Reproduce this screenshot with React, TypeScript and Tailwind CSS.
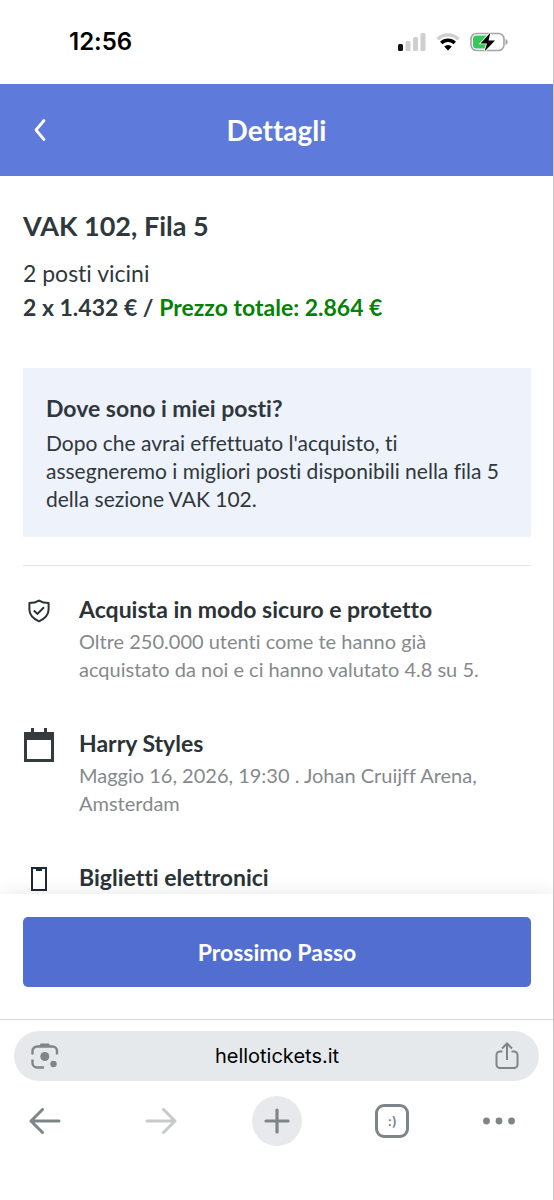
import type { ReactNode } from "react";

function ShieldIcon() {
  return (
    <svg width="24" height="24" viewBox="0 0 24 24" fill="none" stroke="#2b3336" strokeWidth="2">
      <path d="M12 1.6c3 1.9 6.200 2.500 9.600 2.500v6.400c0 5.400-4.400 9.400-9.600 11.800-5.200-2.400-9.600-6.400-9.600-11.800V4.100c3.400 0 6.600-.6 9.600-2.500z" strokeLinejoin="round" />
      <path d="M6.800 11.600l3.600 3.300 6.600-6.600" />
    </svg>
  );
}

function CalendarIcon() {
  return (
    <svg width="32" height="34" viewBox="0 0 32 34" fill="#333b3c">
      <path d="M8 0h3v4h10V0h3v4h7v30H1V4h7z" />
      <path d="M4 12h24v19H4z" fill="#fff" />
    </svg>
  );
}

function PhoneIcon() {
  return (
    <svg width="16" height="24" viewBox="0 0 16 24" fill="none" stroke="#1c2838" strokeWidth="2">
      <path d="M1 1h14v22H1z" />
      <path d="M5 2.500h6" strokeWidth="3" />
    </svg>
  );
}

function StatusIcons() {
  return (
    <div className="flex items-center gap-2.5">
      <svg width="28" height="18" viewBox="0 0 28 18" fill="#cfcfcf">
        <rect x="0" y="11" width="5" height="7" rx="1.500" fill="#111" />
        <rect x="7.500" y="8" width="5" height="10" rx="1.500" />
        <rect x="15" y="4" width="5" height="14" rx="1.500" />
        <rect x="22.500" y="0" width="5" height="18" rx="1.500" />
      </svg>
      <svg width="24" height="18" viewBox="0 0 24 18" fill="none">
        <path d="M1.500 6.200a15 15 0 0 1 21 0" stroke="#cfcfcf" strokeWidth="3.400" />
        <path d="M5.300 10a9.600 9.600 0 0 1 13.400 0" stroke="#000" strokeWidth="3.400" />
        <path d="M12 17.500l-3.800-3.900a5.500 5.500 0 0 1 7.600 0z" fill="#000" />
      </svg>
      <svg width="38" height="20" viewBox="0 0 38 20">
        <rect x="1" y="1.500" width="33" height="17" rx="5.500" fill="#fff" stroke="#a5a5a5" strokeWidth="1.600" />
        <path d="M6.500 3.500H18v13H6.500A3.500 3.500 0 0 1 3 13V7a3.500 3.500 0 0 1 3.500-3.500z" fill="#38c759" />
        <path d="M35.500 7v6c1.400-.6 2.200-1.700 2.200-3s-.8-2.400-2.200-3z" fill="#a5a5a5" />
        <path d="M20.500 .5L10.500 11.500h6.500L14.500 19.500l10.500-11h-6.500z" fill="#000" stroke="#fff" strokeWidth="1.600" paintOrder="stroke" />
      </svg>
    </div>
  );
}

function LensIcon() {
  return (
    <svg width="28" height="28" viewBox="0 0 28 28" fill="none" stroke="#808589" strokeWidth="2.400">
      <path d="M1.500 12.500V9a4.500 4.500 0 0 1 4.500-4.500h15.500A4.500 4.500 0 0 1 26 9v3.500M1.500 17.500V21A4.500 4.500 0 0 0 6 25.500h7" />
      <path d="M8 4.500l1.500-3h8.500l1.500 3z" fill="#808589" stroke="none" />
      <circle cx="13.800" cy="14.500" r="4.500" fill="#808589" stroke="none" />
      <circle cx="22.500" cy="22" r="3.200" fill="#808589" stroke="none" />
    </svg>
  );
}

function ShareIcon() {
  return (
    <svg width="24" height="28" viewBox="0 0 24 28" fill="none" stroke="#808589" strokeWidth="2">
      <path d="M7.500 9.500H5A3.500 3.500 0 0 0 1.500 13v9.500A3.500 3.500 0 0 0 5 26h14a3.500 3.500 0 0 0 3.500-3.500V13A3.500 3.500 0 0 0 19 9.500h-2.500" />
      <path d="M12 18V2M7 6.500l5-5 5 5" />
    </svg>
  );
}

function ArrowIcon() {
  return (
    <svg width="32" height="26" viewBox="0 0 32 26" fill="none" stroke="currentColor" strokeWidth="3" strokeLinecap="round" strokeLinejoin="round">
      <path d="M30 13H2M13.500 1.500L2 13l11.500 11.500" />
    </svg>
  );
}

type InfoRowProps = {
  icon: ReactNode;
  title: string;
  text: string;
};

function InfoRow({ icon, title, text }: InfoRowProps) {
  return (
    <li className="flex gap-6">
      <div className="flex h-9 w-8 shrink-0 items-center justify-center">{icon}</div>
      <div className="pr-4">
        <h3 className="text-[23px] leading-8 font-bold text-[#2b3336]">{title}</h3>
        <p className="mt-0.5 text-[20px] leading-7 text-[#85898b]">{text}</p>
      </div>
    </li>
  );
}

const infoRows: InfoRowProps[] = [
  {
    icon: <ShieldIcon />,
    title: "Acquista in modo sicuro e protetto",
    text: "Oltre 250.000 utenti come te hanno già acquistato da noi e ci hanno valutato 4.8 su 5.",
  },
  {
    icon: <CalendarIcon />,
    title: "Harry Styles",
    text: "Maggio 16, 2026, 19:30 . Johan Cruijff Arena, Amsterdam",
  },
  { icon: <PhoneIcon />, title: "Biglietti elettronici", text: "" },
];

export default function App() {
  return (
    <div className="flex h-screen flex-col border-r border-[#c8c8c8] bg-white font-['Lato',sans-serif] text-[#2f383c] [font-variant-ligatures:none]">
      <div className="flex h-[84px] shrink-0 items-center justify-between pr-[45px] pl-[69px] font-['Inter',sans-serif]">
        <span className="text-[24px] leading-8 font-semibold text-black">12:56</span>
        <StatusIcons />
      </div>

      <header className="grid h-[92px] shrink-0 grid-cols-[80px_1fr_80px] items-center bg-[#5e7adb] text-white">
        <button type="button" aria-label="Indietro" className="flex h-full items-center justify-center">
          <svg width="14" height="24" viewBox="0 0 14 24" fill="none" stroke="currentColor" strokeWidth="2.800" strokeLinecap="round" strokeLinejoin="round">
            <path d="M11 2.500L3 12l8 9.500" />
          </svg>
        </button>
        <h1 className="text-center text-[28px] leading-9 font-bold">Dettagli</h1>
      </header>

      <main className="min-h-0 flex-1 overflow-hidden pt-8 pr-[22px] pl-[23px]">
        <h2 className="text-[27px] leading-9 font-bold">VAK 102, Fila 5</h2>
        <p className="mt-3 text-[23px] leading-[34px]">2 posti vicini</p>
        <p className="text-[23px] leading-[34px] font-bold">
          2 x 1.432 € / <span className="text-[#058205]">Prezzo totale: 2.864 €</span>
        </p>

        <section className="mt-11 bg-[#eef2fb] px-[23px] py-6">
          <h3 className="text-[23px] leading-8 font-bold">Dove sono i miei posti?</h3>
          <p className="mt-[5px] text-[21px] leading-7">
            Dopo che avrai effettuato l'acquisto, ti assegneremo i migliori posti disponibili nella fila 5 della
            sezione VAK 102.
          </p>
        </section>

        <hr className="mt-7 border-[#dfe2e4]" />

        <ul className="mt-[27px] flex flex-col gap-11">
          {infoRows.map((row) => (
            <InfoRow key={row.title} {...row} />
          ))}
        </ul>
      </main>

      <div className="relative shrink-0 border-b border-[#d4d6d8] bg-white pt-[23px] pr-[22px] pb-8 pl-[23px] shadow-[0_-2px_16px_rgba(0,0,0,0.08)]">
        <button type="button" className="h-[70px] w-full rounded-[5px] bg-[#526ed1] text-[23px] font-bold text-white">
          Prossimo Passo
        </button>
      </div>

      <footer className="relative h-[180px] shrink-0 bg-white px-3.5 pt-[11px] font-['Inter',sans-serif] text-[#7d8588]">
        <div className="flex h-[50px] items-center justify-between rounded-full bg-[#e6e9ec] pr-5 pl-[17px]">
          <button type="button" aria-label="Cerca con la fotocamera">
            <LensIcon />
          </button>
          <a href="#" className="text-[20px] leading-7 text-black">
            hellotickets.it
          </a>
          <button type="button" aria-label="Condividi">
            <ShareIcon />
          </button>
        </div>
        <nav className="mt-[15px] flex items-center justify-between pr-6 pl-1.5">
          <button type="button" aria-label="Pagina precedente" className="flex size-[50px] items-center justify-center">
            <ArrowIcon />
          </button>
          <button type="button" aria-label="Pagina successiva" className="flex size-[50px] rotate-180 items-center justify-center text-[#c8c9ca]">
            <ArrowIcon />
          </button>
          <button type="button" aria-label="Nuova scheda" className="flex size-[50px] items-center justify-center rounded-full bg-[#e8e9ed]">
            <svg width="26" height="26" viewBox="0 0 26 26" fill="none" stroke="currentColor" strokeWidth="3.200" strokeLinecap="round">
              <path d="M13 2v22M2 13h22" />
            </svg>
          </button>
          <button type="button" aria-label="Schede" className="flex size-[50px] items-center justify-center">
            <span className="flex size-[34px] items-center justify-center rounded-[9px] border-3 border-[#7d8588] text-[13px] leading-none font-semibold">
              :)
            </span>
          </button>
          <button type="button" aria-label="Altro">
            <svg width="32" height="8" viewBox="0 0 32 8" fill="currentColor">
              <circle cx="3.500" cy="4" r="3.400" />
              <circle cx="16" cy="4" r="3.400" />
              <circle cx="28.500" cy="4" r="3.400" />
            </svg>
          </button>
        </nav>
      </footer>
    </div>
  );
}
